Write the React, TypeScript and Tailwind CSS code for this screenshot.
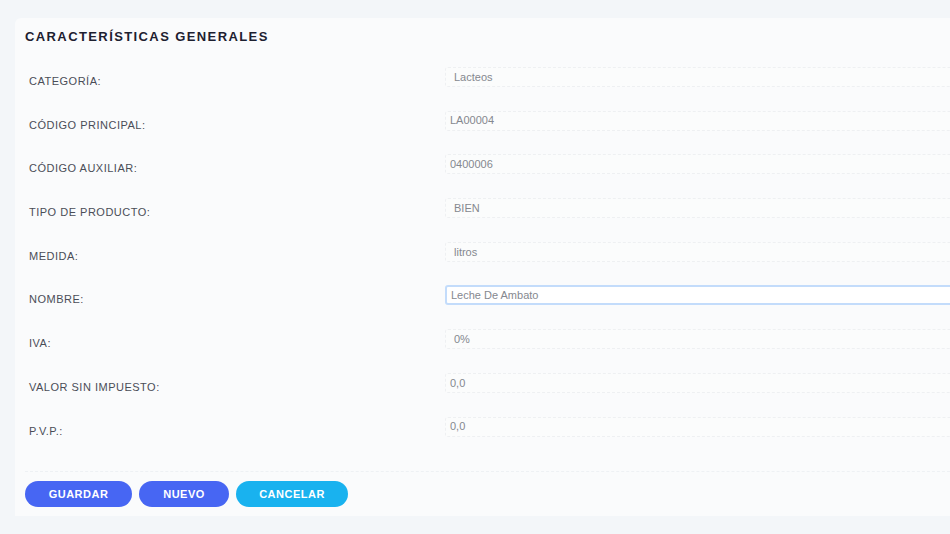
import React from 'react';

const fields = [
  { label: 'CATEGORÍA:', value: 'Lacteos', pad: 'pl-2' },
  { label: 'CÓDIGO PRINCIPAL:', value: 'LA00004', pad: 'pl-1' },
  { label: 'CÓDIGO AUXILIAR:', value: '0400006', pad: 'pl-1' },
  { label: 'TIPO DE PRODUCTO:', value: 'BIEN', pad: 'pl-2' },
  { label: 'MEDIDA:', value: 'litros', pad: 'pl-2' },
  { label: 'NOMBRE:', value: 'Leche De Ambato', pad: 'pl-1', focus: true },
  { label: 'IVA:', value: '0%', pad: 'pl-2' },
  { label: 'VALOR SIN IMPUESTO:', value: '0,0', pad: 'pl-1' },
  { label: 'P.V.P.:', value: '0,0', pad: 'pl-1' },
];

export default function App() {
  return (
    <div className="min-h-[534px] w-[950px] overflow-hidden bg-[#f3f6f9] pt-[18px] pl-[15px] font-['Liberation_Sans',Arial,sans-serif]">
      <div className="w-[960px] h-[498px] rounded-tl-md bg-[#fafbfc] pl-[10px]">
        <h2 className="pt-[11px] text-[13px] font-bold tracking-[1.4px] text-[#1d2030] leading-[16px]">
          CARACTERÍSTICAS GENERALES
        </h2>

        <div className="mt-[22px] flex flex-col">
          {fields.map((f) => (
            <div key={f.label} className="flex h-[43.7px] items-start">
              <label className="w-[420px] pl-[4px] pt-[6px] text-[11px] tracking-[0.5px] text-[#4a4d57]">
                {f.label}
              </label>
              <div
                className={`flex h-[20px] w-[520px] items-center rounded-[3px] text-[11px] text-[#85888f] ${f.pad} ${
                  f.focus
                    ? 'border-2 border-[#c3dcfb] bg-white'
                    : 'border border-dashed border-[#eef0f2] bg-[#fbfcfc]'
                }`}
              >
                {f.value}
              </div>
            </div>
          ))}
        </div>

        <div className="mt-[11px] border-t border-dashed border-[#eef1f4] pt-[9px] flex gap-[7px]">
          <button className="h-[26px] w-[107px] rounded-full bg-[#4766f3] text-[11px] font-bold tracking-[0.5px] text-white">
            GUARDAR
          </button>
          <button className="h-[26px] w-[90px] rounded-full bg-[#4766f3] text-[11px] font-bold tracking-[0.5px] text-white">
            NUEVO
          </button>
          <button className="h-[26px] w-[112px] rounded-full bg-[#19b2ef] text-[11px] font-bold tracking-[0.5px] text-white">
            CANCELAR
          </button>
        </div>
      </div>
    </div>
  );
}
